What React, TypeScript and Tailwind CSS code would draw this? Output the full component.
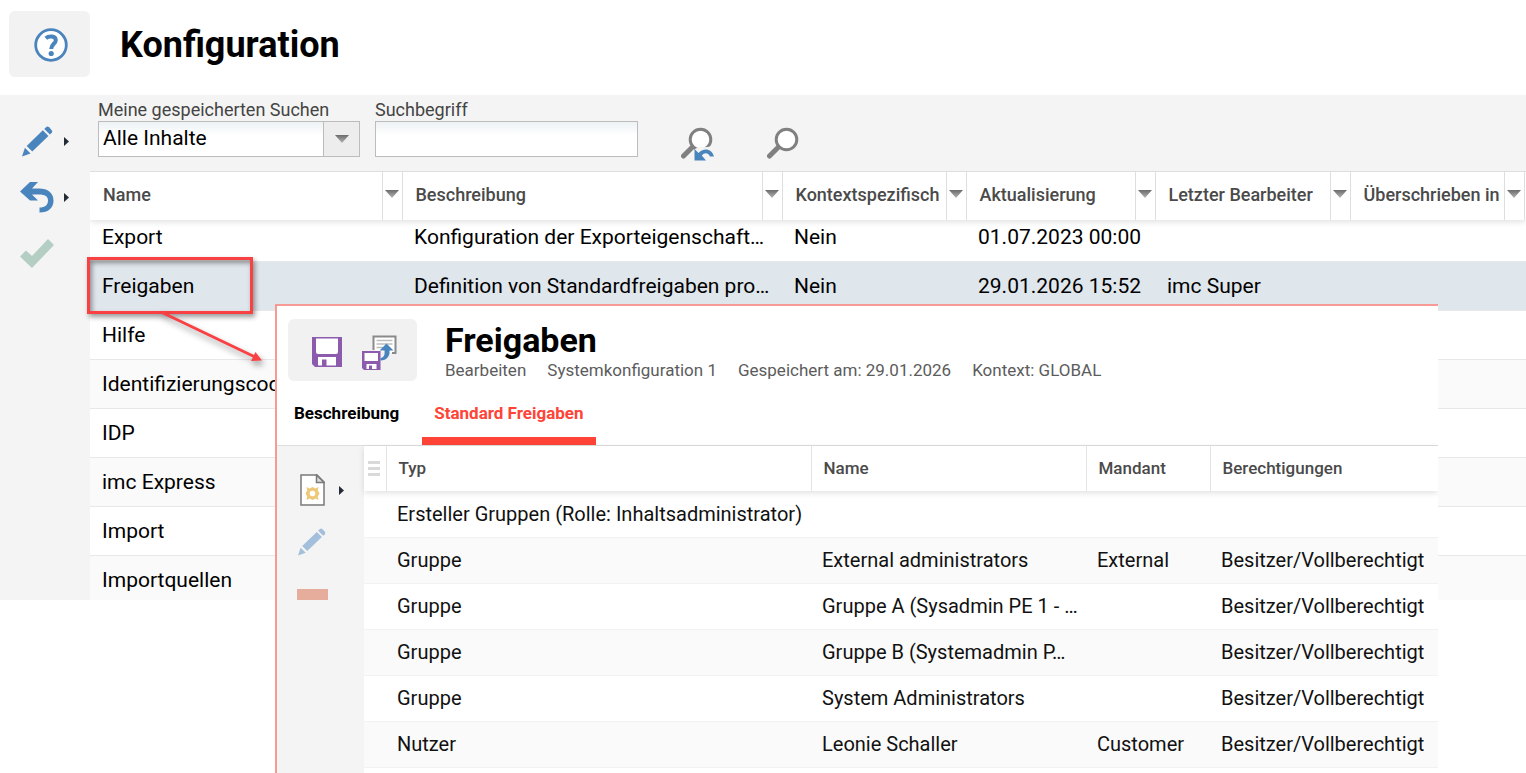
import type { ReactNode } from 'react'

type Config = {
  name: string
  description?: string
  context?: string
  updated?: string
  editor?: string
}

type Permission = {
  type: string
  name?: string
  client?: string
  rights?: string
}

const configs: Config[] = [
  { name: 'Export', description: 'Konfiguration der Exporteigenschaft…', context: 'Nein', updated: '01.07.2023 00:00' },
  {
    name: 'Freigaben',
    description: 'Definition von Standardfreigaben pro…',
    context: 'Nein',
    updated: '29.01.2026 15:52',
    editor: 'imc Super',
  },
  { name: 'Hilfe' },
  { name: 'Identifizierungscodes' },
  { name: 'IDP' },
  { name: 'imc Express' },
  { name: 'Import' },
  { name: 'Importquellen' },
]

const columns = [
  { label: 'Name', width: 'w-[312px]' },
  { label: 'Beschreibung', width: '' },
  { label: 'Kontextspezifisch', width: 'w-[184px]' },
  { label: 'Aktualisierung', width: 'w-[189px]' },
  { label: 'Letzter Bearbeiter', width: 'w-[195px]' },
  { label: 'Überschrieben in', width: 'w-[174px]' },
]

const permissions: Permission[] = [
  { type: 'Ersteller Gruppen (Rolle: Inhaltsadministrator)' },
  { type: 'Gruppe', name: 'External administrators', client: 'External', rights: 'Besitzer/Vollberechtigt' },
  { type: 'Gruppe', name: 'Gruppe A (Sysadmin PE 1 - …', rights: 'Besitzer/Vollberechtigt' },
  { type: 'Gruppe', name: 'Gruppe B (Systemadmin P…', rights: 'Besitzer/Vollberechtigt' },
  { type: 'Gruppe', name: 'System Administrators', rights: 'Besitzer/Vollberechtigt' },
  { type: 'Nutzer', name: 'Leonie Schaller', client: 'Customer', rights: 'Besitzer/Vollberechtigt' },
]

function PencilIcon({ className }: { className?: string }) {
  return (
    <svg viewBox="0 0 32 32" className={className} fill="currentColor" aria-hidden="true">
      <path d="M0 31.500 3 22.500 8.800 28.300Z" />
      <path d="M4.800 20.600 21.500 4.500 27.300 10.300 10.600 26.400Z" />
      <path d="M23 3 25 1.100Q26.500 0 28 1.400L30.500 4Q32 5.600 30.700 7L28.800 8.800Z" />
    </svg>
  )
}

function UndoIcon() {
  return (
    <svg viewBox="0 0 34 31" className="h-[31px] w-[34px]" aria-hidden="true">
      <path d="M0 9.500 10 0H18L12 6.500H19C28 6.500 33.500 11 33.500 18.500 33.500 26 28.500 30.500 19.500 30.500V25.500C25 25.500 28 23 28 18.500 28 14.500 25 12.500 19 12.500H12L18 18.500H10Z" fill="#4a84bd" />
    </svg>
  )
}

function SearchIcon({ reset }: { reset?: boolean }) {
  return (
    <svg viewBox="0 0 34 34" className="size-[34px]" aria-hidden="true">
      <path d="M2.500 29 12 19.500" stroke="#808080" strokeWidth="5" strokeLinecap="round" />
      <circle cx="19.500" cy="12.500" r="10.300" fill="#fff" stroke="#808080" strokeWidth="3" />
      {reset && (
        <>
          <path d="M14 22 17 20.500 27 20 34 18V34H14Z" fill="#f4f4f4" />
          <path d="M13.500 22 17.500 26C22 20.500 31 21 33 29.500H29C27 25.500 23.500 25.500 20.800 28.500L25 33.500H13.500Z" fill="#4a84bd" />
        </>
      )}
    </svg>
  )
}

function SaveIcon() {
  return (
    <svg viewBox="0 0 30 30" className="size-[30px]" aria-hidden="true">
      <path d="M0 0H30V30H3L0 27Z" fill="#8c5bae" />
      <path d="M4 1.500H26V15Q26 17 24 17H6Q4 17 4 15Z" fill="#fff" />
      <path d="M6 20H24V28.500H6Z" fill="#fff" />
      <path d="M10 22.500H14.500V30H10Z" fill="#8c5bae" />
    </svg>
  )
}

function SaveToListIcon() {
  return (
    <svg viewBox="0 0 35 35" className="size-[35px]" aria-hidden="true">
      <path d="M11.500 15V1.500H33.500V18H30" fill="#fff" stroke="#8a8a8a" strokeWidth="2" />
      <path d="M14.500 5.500H30.500M14.500 9H30.500M14.500 12.500H21" stroke="#bdbdbd" strokeWidth="1.500" />
      <path d="M24.500 8.500 31.500 15.500H27.500C28 21 25 25.500 18.500 25.500V23C22 22.500 23 20 22.500 15.500H17.500Z" fill="#4a84bd" />
      <path d="M0 16H18.500V35H2L0 33Z" fill="#8c5bae" />
      <path d="M2.500 18H16V26H2.500ZM4.500 29H14.500V34H4.500Z" fill="#fff" />
      <path d="M7 30.500H10V35H7Z" fill="#8c5bae" />
    </svg>
  )
}

function NewPageIcon() {
  return (
    <svg viewBox="0 0 25 32" className="h-[32px] w-[25px]" aria-hidden="true">
      <path d="M1 1H17L24 8V31H1Z" fill="#fff" stroke="#7a7a7a" strokeWidth="1.500" />
      <path d="M16.500 1V8.500H24Z" fill="#ddd" stroke="#7a7a7a" strokeWidth="1.500" />
      <path d="M6.500 13 9.500 14.500 12.500 13 15.500 14.500 18.500 13 17.800 16.500 19.500 19.500 17.800 22.500 18.500 26 15.500 24.500 12.500 26 9.500 24.500 6.500 26 7.200 22.500 5.500 19.500 7.200 16.500Z" fill="#edc878" />
      <circle cx="12.500" cy="19.500" r="2.800" fill="#fff" />
    </svg>
  )
}

function MenuArrow() {
  return (
    <svg viewBox="0 0 5 9" className="h-[9px] w-[5px]" aria-hidden="true">
      <path d="M0 0 5 4.500 0 9Z" fill="#222b36" />
    </svg>
  )
}

function DownArrow() {
  return (
    <svg viewBox="0 0 14 8" className="h-2 w-3.5" aria-hidden="true">
      <defs>
        <linearGradient id="arrow" x1="0" x2="0" y1="0" y2="1">
          <stop offset="0" stopColor="#6b6b6b" />
          <stop offset="1" stopColor="#b5b5b5" />
        </linearGradient>
      </defs>
      <path d="M0 0H14L7 8Z" fill="url(#arrow)" />
    </svg>
  )
}

function ToolButton({ label, menu, children }: { label: string; menu?: boolean; children: ReactNode }) {
  return (
    <button type="button" aria-label={label} className="flex h-8 items-center gap-2.5">
      <span className="flex w-[34px] justify-center">{children}</span>
      {menu && <MenuArrow />}
    </button>
  )
}

function ConfigTable() {
  return (
    <div className="h-[429px] overflow-hidden border-t border-[#dedede] bg-white">
      <table className="w-full table-fixed border-collapse text-left">
        <thead className="relative shadow-[0_2px_6px_rgba(0,0,0,0.12)]">
          <tr className="h-12 bg-white">
            {columns.map((column) => (
              <th key={column.label} className={`border-r border-[#dedede] p-0 font-medium ${column.width}`}>
                <div className="flex h-12 items-center">
                  <span className="flex-1 truncate pb-0.5 pl-[13px] text-lg text-[#4a4a4a]">{column.label}</span>
                  <button
                    type="button"
                    aria-label={`${column.label} filtern`}
                    className="flex h-12 w-5 shrink-0 items-center justify-center border-l border-[#dedede] pb-1"
                  >
                    <DownArrow />
                  </button>
                </div>
              </th>
            ))}
            <th className="w-0.5 p-0" aria-hidden="true" />
          </tr>
        </thead>
        <tbody className="text-[21px] leading-6 text-black">
          {configs.map((config, index) => {
            const selected = config.name === 'Freigaben'
            return (
              <tr
                key={config.name}
                className={`border-b border-[#e8e8e8] [&_td]:pl-3 [&_td]:whitespace-nowrap ${
                  index === 0 ? 'h-[41px] align-top [&_td]:pt-[5px]' : 'h-[49px]'
                } ${selected ? 'bg-[#dfe6ec]' : index % 2 ? 'bg-[#fafafa]' : 'bg-white'}`}
              >
                <td>{config.name}</td>
                <td>{config.description}</td>
                <td>{config.context}</td>
                <td>{config.updated}</td>
                <td>{config.editor}</td>
                <td />
                <td />
              </tr>
            )
          })}
        </tbody>
      </table>
    </div>
  )
}

function PermissionTable() {
  return (
    <table className="w-full table-fixed border-collapse self-start bg-white text-left">
      <thead className="relative text-[17px] text-[#4a4a4a] shadow-[0_2px_6px_rgba(0,0,0,0.12)] [&_th]:border-r [&_th]:border-[#e4e4e4] [&_th]:font-medium">
        <tr className="h-[45px] bg-white">
          <th className="w-[22px] p-0">
            <button type="button" aria-label="Spalten" className="mr-auto ml-1 flex w-3 flex-col gap-[3px]">
              <span className="h-[3px] w-full bg-[#d9d9d9]" />
              <span className="h-[3px] w-full bg-[#d9d9d9]" />
              <span className="h-[3px] w-full bg-[#d9d9d9]" />
            </button>
          </th>
          <th className="px-3">Typ</th>
          <th className="w-[275px] px-3">Name</th>
          <th className="w-[124px] px-3">Mandant</th>
          <th className="w-[228px] px-3 !border-r-0">Berechtigungen</th>
        </tr>
      </thead>
      <tbody className="text-[20px] leading-6 text-[#111]">
        {permissions.map((row, index) => (
          <tr key={index} className="h-[46px] border-b border-[#f2f2f2] even:bg-[#fafafa] [&_td]:pl-[11px] [&_td]:whitespace-nowrap">
            <td />
            <td>{row.type}</td>
            <td>{row.name}</td>
            <td>{row.client}</td>
            <td>{row.rights}</td>
          </tr>
        ))}
      </tbody>
    </table>
  )
}

function PermissionDialog() {
  return (
    <section className="absolute top-[304px] right-[88px] bottom-0 left-[275px] flex flex-col overflow-hidden border-t-2 border-l-2 border-[#f79a96] bg-white">
      <header className="flex gap-7 pt-[13px] pl-[11px]">
        <div className="flex h-[62px] w-[129px] items-center justify-center gap-5 rounded-md bg-[#f1f1f1] pt-1 pl-1">
          <button type="button" aria-label="Speichern">
            <SaveIcon />
          </button>
          <button type="button" aria-label="Speichern und zur Liste">
            <SaveToListIcon />
          </button>
        </div>
        <div>
          <h2 className="text-[34px] leading-[42px] font-bold text-black">Freigaben</h2>
          <p className="flex gap-[21px] text-[17px] leading-[18px] text-[#5c5c5c]">
            <span>Bearbeiten</span>
            <span>Systemkonfiguration 1</span>
            <span>Gespeichert am: 29.01.2026</span>
            <span>Kontext: GLOBAL</span>
          </p>
        </div>
      </header>
      <nav className="flex h-[65px] shrink-0 gap-[11px] border-b border-[#dedede] pl-[5px] text-[17px] font-bold">
        <a href="#beschreibung" className="flex items-center px-3 pt-0.5 text-black">
          Beschreibung
        </a>
        <a href="#freigaben" className="flex items-center border-b-8 border-[#ff4437] px-3 pt-2.5 text-[#ff4437]">
          Standard Freigaben
        </a>
      </nav>
      <div className="flex flex-1">
        <div className="flex w-[87px] shrink-0 flex-col gap-5 bg-[#f4f4f4] pt-7 pl-[18px]">
          <ToolButton label="Neu" menu>
            <NewPageIcon />
          </ToolButton>
          <ToolButton label="Bearbeiten">
            <PencilIcon className="size-7 text-[#a3bfdb]" />
          </ToolButton>
          <ToolButton label="Entfernen">
            <span className="h-[11px] w-[31px] bg-[#e6ac9c]" />
          </ToolButton>
        </div>
        <PermissionTable />
      </div>
    </section>
  )
}

export default function App() {
  return (
    <div className="relative min-h-screen overflow-hidden bg-white font-[Roboto,sans-serif]">
      <header className="flex h-[95px] items-start gap-[30px] pt-[11px] pl-[9px]">
        <button type="button" aria-label="Hilfe" className="flex h-[66px] w-[81px] items-center justify-center rounded-md bg-[#f2f2f2] pt-0.5 pl-0.5">
          <svg viewBox="0 0 34 34" className="size-[34px]" fill="none" stroke="#4a84bd" aria-hidden="true">
            <circle cx="17" cy="17" r="15.300" fill="#fff" strokeWidth="2.800" />
            <path d="M11.800 10.200C14.500 7.800 21.800 7.300 21.800 12.200 21.800 15.800 17.200 16 17.200 21" strokeWidth="4" />
            <circle cx="17.200" cy="25.500" r="2.600" fill="#4a84bd" stroke="none" />
          </svg>
        </button>
        <h1 className="text-[36px] leading-[68px] font-bold text-black">Konfiguration</h1>
      </header>

      <div className="flex bg-[#f4f4f4]">
        <aside className="flex w-[90px] shrink-0 flex-col gap-6 pt-[30px] pl-5">
          <ToolButton label="Bearbeiten" menu>
            <PencilIcon className="size-[31px] text-[#4a84bd]" />
          </ToolButton>
          <ToolButton label="Zurück" menu>
            <UndoIcon />
          </ToolButton>
          <ToolButton label="Bestätigen">
            <svg viewBox="0 0 34 29" className="h-[29px] w-[34px]" aria-hidden="true">
              <path d="M0 17.500 6 11.500 12 17 28 0 34 6 12 29Z" fill="#b4cec4" />
            </svg>
          </ToolButton>
        </aside>
        <main className="min-w-0 flex-1">
          <div className="flex h-[76px] items-start pt-1 pl-2">
            <div className="w-[262px]">
              <label htmlFor="saved" className="block text-lg leading-[22px] text-[#444]">
                Meine gespeicherten Suchen
              </label>
              <div className="relative">
                <select
                  id="saved"
                  className="h-9 w-full appearance-none border border-[#bcbcbc] bg-linear-to-b from-[#edf2f4] to-white to-40% pb-0.5 pl-1 text-[21px] leading-6 text-black"
                >
                  <option>Alle Inhalte</option>
                </select>
                <span className="pointer-events-none absolute inset-y-0 right-0 flex w-[37px] items-center justify-center border border-[#bcbcbc] bg-[#ededed]">
                  <DownArrow />
                </span>
              </div>
            </div>
            <div className="ml-[15px] w-[263px]">
              <label htmlFor="term" className="block text-lg leading-[22px] text-[#444]">
                Suchbegriff
              </label>
              <input
                id="term"
                type="text"
                className="h-9 w-full border border-[#bcbcbc] bg-linear-to-b from-[#edf2f4] to-white to-40% px-1.5 text-[21px]"
              />
            </div>
            <button type="button" aria-label="Suche zurücksetzen" className="mt-7 ml-[43px]">
              <SearchIcon reset />
            </button>
            <button type="button" aria-label="Suchen" className="mt-7 ml-[52px]">
              <SearchIcon />
            </button>
          </div>
          <ConfigTable />
        </main>
      </div>

      <PermissionDialog />

      {/* highlight frame and arrow pointing from the row to its dialog */}
      <div className="pointer-events-none absolute top-[257px] left-[87px] h-[57px] w-[166px] border-3 border-[#f94144] shadow-[2px_3px_5px_rgba(0,0,0,0.4),inset_2px_3px_5px_rgba(0,0,0,0.4)]" />
      <svg
        viewBox="0 0 110 60"
        className="pointer-events-none absolute top-[310px] left-[158px] h-[60px] w-[110px] drop-shadow-[2px_4px_3px_rgba(0,0,0,0.4)]"
        aria-hidden="true"
      >
        <path d="M3 2 96 46.500" stroke="#f94144" strokeWidth="3" />
        <path d="M104 50.500 93 51 97.500 42Z" fill="#f94144" />
      </svg>
    </div>
  )
}
